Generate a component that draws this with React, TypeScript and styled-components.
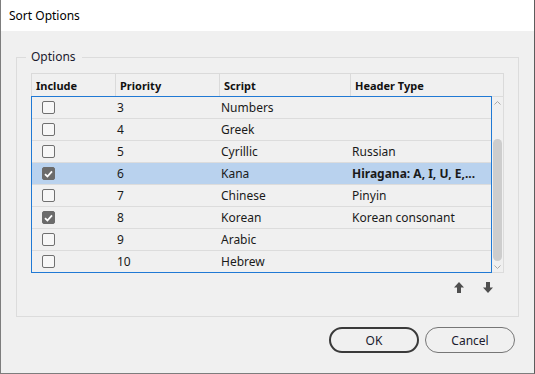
import React from "react";
import styled, { createGlobalStyle } from "styled-components";

const GlobalStyle = createGlobalStyle`
  html, body {
    margin: 0;
    padding: 0;
    background: #f0f0f0;
  }
  body {
    font-family: "Noto Sans", "Segoe UI", sans-serif;
    font-size: 12px;
    color: #1a1a1a;
  }
  * {
    box-sizing: border-box;
  }
`;

const Window = styled.div`
  width: 535px;
  height: 374px;
  display: flex;
  flex-direction: column;
  background: #f0f0f0;
  border: 1px solid #7d7d7d;
  border-top: none;
  border-right-color: #5c5c5c;
`;

const TitleBar = styled.div`
  height: 31px;
  flex: none;
  display: flex;
  align-items: center;
  padding-left: 8px;
  background: #ffffff;
  color: #000;
  font-size: 12px;
`;

const Body = styled.div`
  flex: 1;
  display: flex;
  flex-direction: column;
  padding: 18px 15px 0 15px;
`;

const GroupBox = styled.fieldset`
  margin: 0;
  height: 268px;
  padding: 8px 14px 0 14px;
  border: 1px solid #dcdcdc;
  min-width: 0;
`;

const Legend = styled.legend`
  padding: 0 6px 0 5px;
  margin-left: -5px;
  line-height: 16px;
  font-size: 12px;
  color: #1a1a2e;
`;

const COLS = "84px 104px 131px 1fr";

const HeaderRow = styled.div`
  display: grid;
  grid-template-columns: ${COLS};
  height: 23px;
  border: 1px solid #dadada;
  border-bottom: none;
`;

const HeaderCell = styled.div`
  display: flex;
  align-items: center;
  padding-left: 4px;
  font-size: 11px;
  font-weight: 700;
  color: #111;
  border-right: 1px solid #dadada;
  &:last-child {
    border-right: none;
  }
`;

const ListArea = styled.div`
  display: grid;
  grid-template-columns: 1fr 12px;
  height: 177px;
`;

const List = styled.div`
  border: 1px solid #2079d4;
  display: flex;
  flex-direction: column;
  overflow: hidden;
`;

const Row = styled.div<{ $selected?: boolean }>`
  display: grid;
  grid-template-columns: ${COLS};
  height: 22px;
  flex: none;
  border-bottom: 1px solid #dcdcdc;
  background: ${(p) => (p.$selected ? "#b9d2ee" : "transparent")};
  &:last-child {
    border-bottom: none;
    height: 21px;
  }
`;

const Cell = styled.div<{ $bold?: boolean }>`
  display: flex;
  align-items: center;
  padding-left: 1px;
  white-space: nowrap;
  overflow: hidden;
  font-weight: ${(p) => (p.$bold ? 700 : 400)};
`;

const CheckCell = styled.div`
  display: flex;
  align-items: center;
  padding-left: 10px;
`;

const Box = styled.div<{ $checked?: boolean }>`
  width: 13px;
  height: 13px;
  border-radius: 2px;
  border: 1px solid ${(p) => (p.$checked ? "#6b6b6b" : "#707070")};
  background: ${(p) => (p.$checked ? "#6b6b6b" : "#f7f7f7")};
  display: flex;
  align-items: center;
  justify-content: center;
`;

const ScrollBar = styled.div`
  border: 1px solid #dcdcdc;
  border-left: none;
  display: flex;
  flex-direction: column;
  align-items: center;
  padding-top: 3px;
`;

const Thumb = styled.div`
  width: 9px;
  height: 122px;
  margin-top: 34px;
  border-radius: 5px;
  background: #cdcdcd;
`;

const Chevron = styled.svg<{ $gap?: number }>`
  display: block;
  margin-top: ${(p) => p.$gap ?? 0}px;
`;

const MoveBar = styled.div`
  display: flex;
  justify-content: flex-end;
  gap: 19px;
  padding-right: 11px;
  margin-top: 9px;
`;

const Footer = styled.div`
  display: flex;
  justify-content: flex-end;
  gap: 6px;
  margin-top: 10px;
  padding-right: 4px;
`;

const Button = styled.button<{ $default?: boolean }>`
  width: 90px;
  height: 26px;
  border-radius: 13px;
  background: #f0f0f0;
  border: ${(p) => (p.$default ? "2px solid #3a3a3a" : "1px solid #767676")};
  font-family: "Noto Sans", "Segoe UI", sans-serif;
  font-size: 12px;
  color: #1a1a2e;
  padding: 0;
`;

type Item = {
  priority: number;
  script: string;
  header?: string;
  checked?: boolean;
  selected?: boolean;
};

const items: Item[] = [
  { priority: 3, script: "Numbers" },
  { priority: 4, script: "Greek" },
  { priority: 5, script: "Cyrillic", header: "Russian" },
  { priority: 6, script: "Kana", header: "Hiragana: A, I, U, E,...", checked: true, selected: true },
  { priority: 7, script: "Chinese", header: "Pinyin" },
  { priority: 8, script: "Korean", header: "Korean consonant", checked: true },
  { priority: 9, script: "Arabic" },
  { priority: 10, script: "Hebrew" },
];

const Check = ({ checked }: { checked?: boolean }) => (
  <Box $checked={checked}>
    {checked && (
      <svg width="9" height="8" viewBox="0 0 9 8">
        <polyline points="1,4.2 3.4,6.5 8,1.3" fill="none" stroke="#fff" strokeWidth="1.8" />
      </svg>
    )}
  </Box>
);

const ArrowUp = () => (
  <svg width="10" height="11" viewBox="0 0 10 11">
    <path d="M5 0 L10 5.5 H7 V11 H3 V5.5 H0 Z" fill="#4f4f4f" />
  </svg>
);

const ArrowDown = () => (
  <svg width="10" height="11" viewBox="0 0 10 11">
    <path d="M5 11 L10 5.5 H7 V0 H3 V5.5 H0 Z" fill="#4f4f4f" />
  </svg>
);

export default function App() {
  return (
    <>
      <GlobalStyle />
      <Window>
        <TitleBar>Sort Options</TitleBar>
        <Body>
          <GroupBox>
            <Legend>Options</Legend>
            <HeaderRow>
              <HeaderCell>Include</HeaderCell>
              <HeaderCell>Priority</HeaderCell>
              <HeaderCell>Script</HeaderCell>
              <HeaderCell>Header Type</HeaderCell>
            </HeaderRow>
            <ListArea>
              <List>
                {items.map((it) => (
                  <Row key={it.priority} $selected={it.selected}>
                    <CheckCell>
                      <Check checked={it.checked} />
                    </CheckCell>
                    <Cell>{it.priority}</Cell>
                    <Cell>{it.script}</Cell>
                    <Cell $bold={it.selected}>{it.header ?? ""}</Cell>
                  </Row>
                ))}
              </List>
              <ScrollBar>
                <Chevron width="7" height="4" viewBox="0 0 7 4" $gap={1}>
                  <polyline points="0.5,3.5 3.5,0.5 6.5,3.5" fill="none" stroke="#a8a8a8" strokeWidth="1" />
                </Chevron>
                <Thumb />
                <Chevron width="7" height="4" viewBox="0 0 7 4" $gap={4}>
                  <polyline points="0.5,0.5 3.5,3.5 6.5,0.5" fill="none" stroke="#a8a8a8" strokeWidth="1" />
                </Chevron>
              </ScrollBar>
            </ListArea>
            <MoveBar>
              <ArrowUp />
              <ArrowDown />
            </MoveBar>
          </GroupBox>
          <Footer>
            <Button $default>OK</Button>
            <Button>Cancel</Button>
          </Footer>
        </Body>
      </Window>
    </>
  );
}
